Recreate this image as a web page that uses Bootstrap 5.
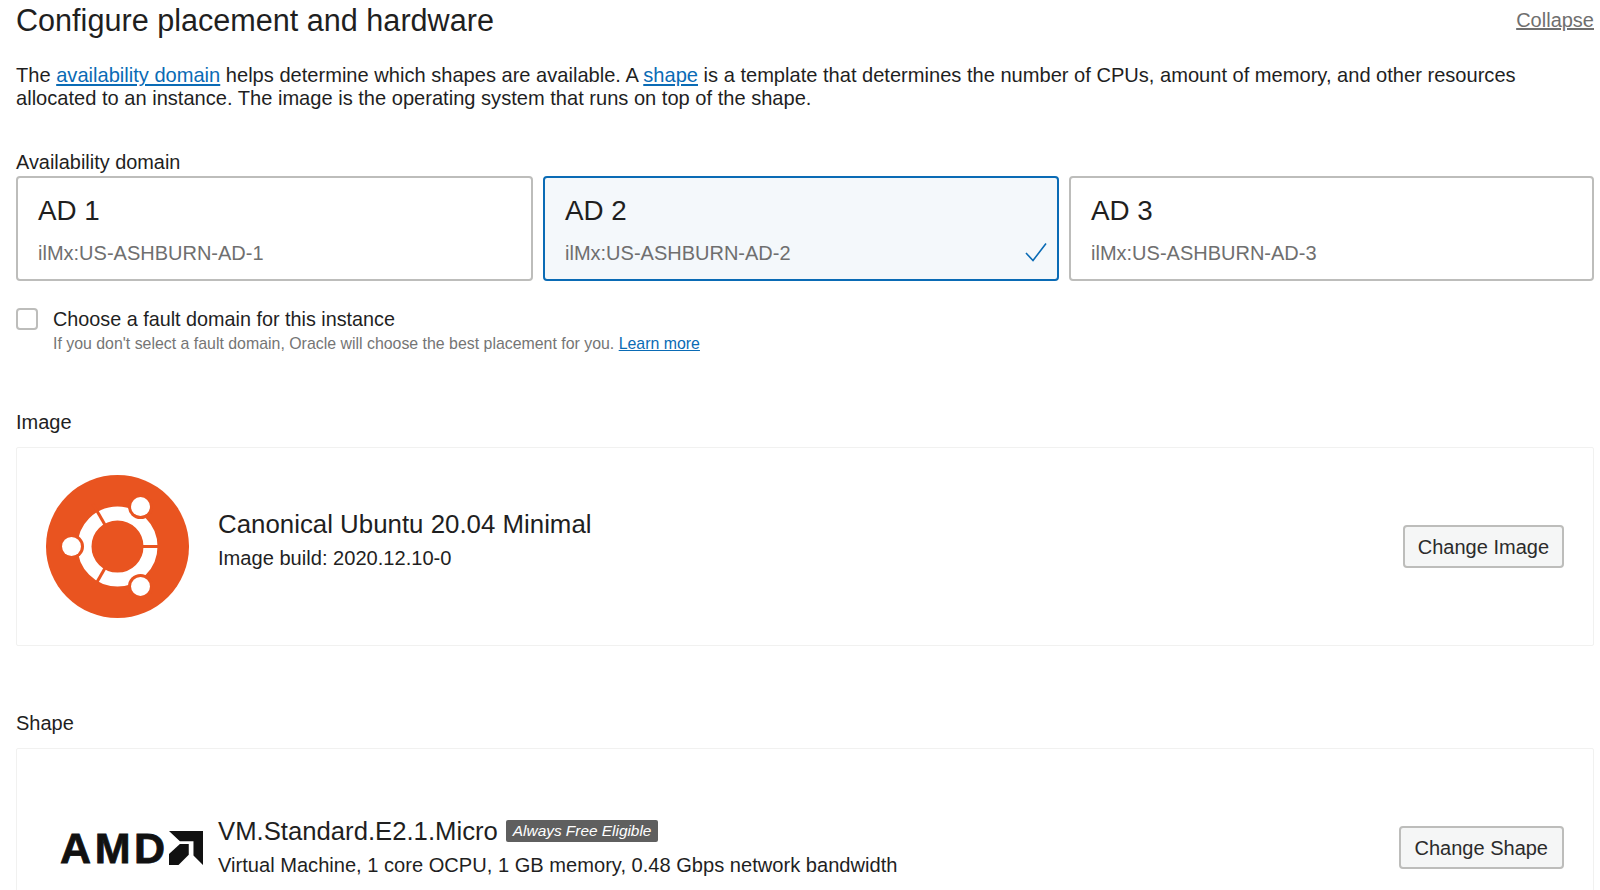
<!DOCTYPE html>
<html lang="en">
<head>
<meta charset="utf-8">
<title>Configure placement and hardware</title>
<link href="https://cdn.jsdelivr.net/npm/bootstrap@5.3.0/dist/css/bootstrap.min.css" rel="stylesheet">
<style>
html,body{height:890px;overflow:hidden;background:#fff}
body{font-family:"Liberation Sans",Arial,sans-serif;color:#1f1f1f;font-size:20px;line-height:23px}
.pg{padding:0 6px 0 16px}
.hd-title{font-size:30.6px;line-height:40px;font-weight:400;margin:0;color:#1f1f1f}
.hd-link{font-size:20px;color:#6f6f6f;text-decoration:underline}
.intro{margin:24px 0 0;width:1540px;font-size:20.08px}
a.bl{color:#0a6bb5;text-decoration:underline}
.fld-label{margin-top:39px;height:26px;line-height:26px;font-size:19.9px}
.ad-row{display:grid;grid-template-columns:517px 516px 525px;gap:10px;margin-top:1px}
.ad-card{height:105px;border:2px solid #bdbdbb;border-radius:4px;padding:16px 20px 0;position:relative}
.ad-card.on{border-color:#0a6bb5;background:#f4f8fb}
.ad-name{font-size:27.8px;line-height:34px}
.ad-id{color:#6f6f6f;font-size:20px;line-height:24px;margin-top:13px}
.ad-check{position:absolute;right:10px;bottom:17px;width:22px;height:20px}
.fault{margin-top:27px;gap:15px}
.cbx{width:22px;height:22px;border:2px solid #bdbdbb;border-radius:4px;flex:none;background:#fff}
.fault-lbl{line-height:22px;font-size:19.8px}
.fault-sub{font-size:15.9px;line-height:20px;color:#757575;margin-top:4px}
.fault-sub a{font-size:15.9px}
.sec-label{height:26px;line-height:26px}
.sec-a{margin-top:55px}
.sec-b{margin-top:64px}
.pick{border:1px solid #f1f1f0;border-radius:2px;margin-top:12px;padding:0 29px}
.pick-img{height:199px}
.pick-shape{height:170px;padding-top:66px;align-items:flex-start}
.logo-box{width:143px;flex:none}
.logo-box svg{display:block;flex:none}
.pick-title{font-size:25.85px;line-height:32px}
.pick-shape .pick-title{font-size:25.7px}
.pick-sub{font-size:20.1px;line-height:24px;margin-top:6px}
.img-body{margin-bottom:15px}
.pick-body{margin-left:29px;flex:1}
.amd{font-weight:700;font-size:43px;line-height:36px;color:#111;letter-spacing:3.6px;-webkit-text-stroke:.8px #111;flex:none}
.amd-row{height:36px;padding-left:14px;margin-top:15px;white-space:nowrap}
.free{background:#5f5f5f;color:#fff;font-style:italic;font-size:15.4px;line-height:22px;padding:0 7px;border-radius:2px;margin-left:8px;white-space:nowrap}
.act{background:#f5f6f6;border:2px solid #bdbdbb;border-radius:4px;color:#2b2b2b;font-size:20px;line-height:38px;height:43px;padding:0 13px;white-space:nowrap}
.act:hover{background:#f5f6f6;border-color:#bdbdbb}
.act-shape{margin-top:11px;padding:0 14px}
</style>
</head>
<body>
<main class="pg">
  <div class="d-flex justify-content-between align-items-center">
    <h1 class="hd-title">Configure placement and hardware</h1>
    <a href="#" class="hd-link">Collapse</a>
  </div>
  <p class="intro">The <a href="#" class="bl">availability domain</a> helps determine which shapes are available. A <a href="#" class="bl">shape</a> is a template that determines the number of CPUs, amount of memory, and other resources allocated to an instance. The image is the operating system that runs on top of the shape.</p>

  <div class="fld-label">Availability domain</div>
  <div class="ad-row">
    <div class="ad-card"><div class="ad-name">AD 1</div><div class="ad-id">ilMx:US-ASHBURN-AD-1</div></div>
    <div class="ad-card on"><div class="ad-name">AD 2</div><div class="ad-id">ilMx:US-ASHBURN-AD-2</div>
      <svg class="ad-check" viewBox="0 0 22 20" aria-hidden="true"><path d="M1 11 L8 18.500 L21 1.500" fill="none" stroke="#0a6bb5" stroke-width="1.600"/></svg>
    </div>
    <div class="ad-card"><div class="ad-name">AD 3</div><div class="ad-id">ilMx:US-ASHBURN-AD-3</div></div>
  </div>

  <div class="d-flex fault">
    <span class="cbx"></span>
    <div>
      <div class="fault-lbl">Choose a fault domain for this instance</div>
      <div class="fault-sub">If you don't select a fault domain, Oracle will choose the best placement for you. <a href="#" class="bl">Learn more</a></div>
    </div>
  </div>

  <div class="sec-label sec-a">Image</div>
  <div class="pick pick-img d-flex align-items-center">
    <div class="logo-box">
      <svg width="143" height="143" viewBox="0 0 143 143" aria-hidden="true">
        <circle cx="71.500" cy="71.500" r="71.500" fill="#e95420"/>
        <circle cx="71.500" cy="71.500" r="33" fill="none" stroke="#fff" stroke-width="14"/>
        <g stroke="#e95420" stroke-width="3">
          <line x1="95" y1="71.500" x2="116" y2="71.500"/>
          <line x1="59.500" y1="50.700" x2="47" y2="29"/>
          <line x1="59.500" y1="92.300" x2="47" y2="114"/>
        </g>
        <g fill="#e95420">
          <circle cx="25.500" cy="71.500" r="12.500"/><circle cx="94.500" cy="31.600" r="12.500"/><circle cx="94.500" cy="111.400" r="12.500"/>
        </g>
        <g fill="#fff">
          <circle cx="25.500" cy="71.500" r="9.500"/><circle cx="94.500" cy="31.600" r="9.500"/><circle cx="94.500" cy="111.400" r="9.500"/>
        </g>
      </svg>
    </div>
    <div class="pick-body img-body">
      <div class="pick-title">Canonical Ubuntu 20.04 Minimal</div>
      <div class="pick-sub">Image build: 2020.12.10-0</div>
    </div>
    <button type="button" class="btn act">Change Image</button>
  </div>

  <div class="sec-label sec-b">Shape</div>
  <div class="pick pick-shape d-flex">
    <div class="logo-box">
      <div class="d-flex align-items-center amd-row">
        <span class="amd">AMD</span>
        <svg width="34" height="36" viewBox="0 0 100 100" aria-hidden="true"><path d="M0 0H100V100L72 72V30H32Z" fill="#111"/><path d="M32 38L0 68V100H28L58 70V38Z" fill="#111"/></svg>
      </div>
    </div>
    <div class="pick-body">
      <div class="pick-title d-flex align-items-center">VM.Standard.E2.1.Micro<span class="free">Always Free Eligible</span></div>
      <div class="pick-sub">Virtual Machine, 1 core OCPU, 1 GB memory, 0.48 Gbps network bandwidth</div>
    </div>
    <button type="button" class="btn act act-shape">Change Shape</button>
  </div>
</main>
<script src="https://cdn.jsdelivr.net/npm/bootstrap@5.3.0/dist/js/bootstrap.bundle.min.js"></script>
</body>
</html>
